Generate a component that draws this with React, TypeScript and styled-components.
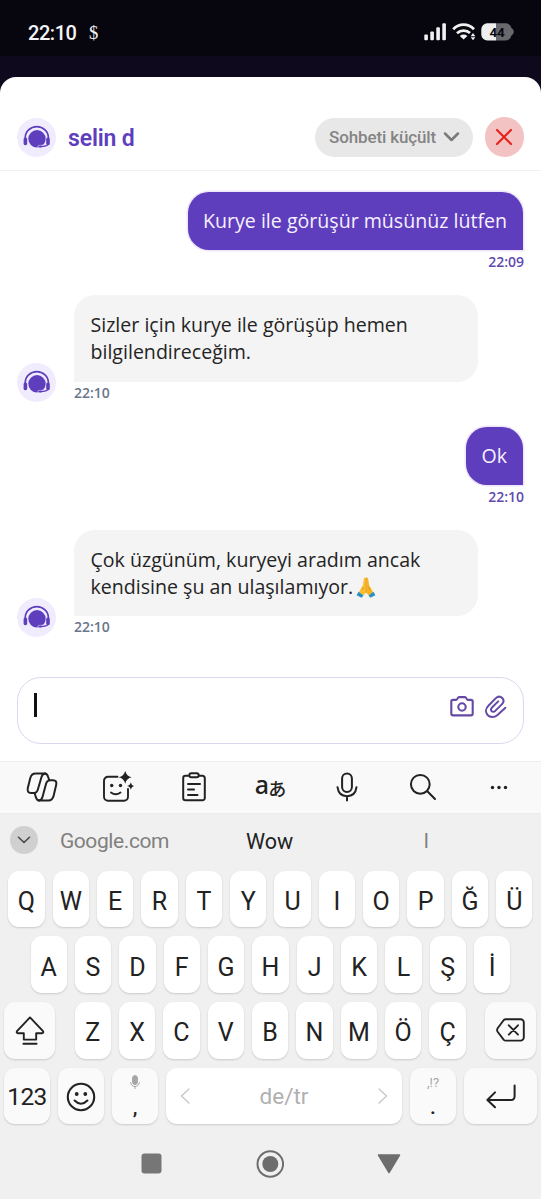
import React from "react";
import styled, { createGlobalStyle } from "styled-components";

const PURPLE = "#5e3ebd";

const Global = createGlobalStyle`
  * { box-sizing: border-box; }
  body { margin: 0; background: #f0f0f0; }
`;

const Screen = styled.div`
  width: 541px;
  height: 1199px;
  overflow: hidden;
  display: flex;
  flex-direction: column;
  background: #0e091d;
  font-family: Roboto, sans-serif;
`;

const StatusBar = styled.div`
  height: 56px;
  flex: none;
  margin-bottom: 21px;
  padding: 9px 27.5px 0 28px;
  background: #07060e;
  color: #f4f4f6;
  display: flex;
  align-items: center;
`;

const Clock = styled.span`
  font-size: 20px;
  font-weight: 500;
  letter-spacing: -0.45px;
  width: 61px;
`;

const Dollar = styled.span`
  font-family: "Liberation Serif", serif;
  font-size: 18.5px;
  line-height: 20px;
  flex: 1;
`;

const StatusIcons = styled.svg`
  display: block;
  flex: none;
  margin-bottom: 1px;
`;

const Sheet = styled.div`
  flex: 1;
  min-height: 0;
  background: #fff;
  border-radius: 16px 16px 0 0;
  display: flex;
  flex-direction: column;
`;

const Header = styled.header`
  height: 94px;
  flex: none;
  padding: 27px 17px 0 17px;
  border-bottom: 1px solid #f0f0f2;
  display: flex;
  align-items: center;
`;

const Avatar = styled.svg`
  display: block;
  flex: none;
  width: 39px;
  height: 39px;
`;

const AgentName = styled.h1`
  flex: 1;
  margin: 3px 0 0 12px;
  color: ${PURPLE};
  font-size: 23px;
  font-weight: 600;
  letter-spacing: -0.15px;
  line-height: 28px;
`;

const MinimizeButton = styled.button`
  width: 158px;
  height: 39px;
  padding: 0 0 0 14px;
  border: 0;
  border-radius: 20px;
  background: #e8e8e8;
  color: #848484;
  font: 500 17px/20px Roboto, sans-serif;
  letter-spacing: -0.13px;
  display: flex;
  align-items: center;
  gap: 7px;
  white-space: nowrap;
`;

const CloseButton = styled.button`
  width: 39.5px;
  height: 39.5px;
  margin-left: 11.5px;
  padding: 0;
  border: 0;
  border-radius: 50%;
  background: #f3c3c3;
  display: flex;
  align-items: center;
  justify-content: center;
`;

const Messages = styled.main`
  height: 506px;
  flex: none;
  padding: 21px 17px 0 17px;
  font-family: "Open Sans", "Noto Sans", sans-serif;
  display: flex;
  flex-direction: column;
`;

const Sent = styled.div<{ $gap: number }>`
  align-self: flex-end;
  margin-bottom: ${(p) => p.$gap}px;
  display: flex;
  flex-direction: column;
  align-items: flex-end;
`;

const SentBubble = styled.div`
  height: 58px;
  margin-right: 1.5px;
  padding: 0 15.5px;
  border-radius: 21px 21px 0 21px;
  background: ${PURPLE};
  box-shadow: 0 0 0 1.5px #eee6fb;
  color: #f6f1ff;
  font-size: 19.58px;
  line-height: 57px;
  white-space: nowrap;
`;

const Time = styled.time<{ $sent?: boolean }>`
  display: block;
  height: 24px;
  color: ${(p) => (p.$sent ? "#5f4bb0" : "#6b7689")};
  font-size: 14px;
  font-weight: 600;
  line-height: ${(p) => (p.$sent ? 24 : 22)}px;
`;

const Received = styled.div<{ $gap: number }>`
  margin-bottom: ${(p) => p.$gap}px;
  display: flex;
  align-items: flex-end;
  gap: 18px;
`;

const AvatarSlot = styled.div`
  padding-bottom: 3.5px;
`;

const ReceivedBubble = styled.div`
  width: 404px;
  height: 86.5px;
  padding: 16px 16.5px 0;
  border-radius: 21px 21px 21px 0;
  background: #f4f4f4;
  color: #242424;
  font-size: 19.58px;
  line-height: 27px;
  white-space: nowrap;
`;

const Emoji = styled.svg`
  display: inline-block;
  vertical-align: -4px;
  margin-left: 3px;
`;

const Composer = styled.div`
  height: 67px;
  flex: none;
  margin: 0 17px 17px;
  padding: 0 15.5px 0 16px;
  border: 1.5px solid #dcd7ee;
  border-radius: 24px;
  display: flex;
  align-items: flex-start;
`;

const Caret = styled.span`
  width: 2.5px;
  height: 24px;
  margin: 15px auto 0 0;
  background: #111;
`;

const ComposerIcon = styled.svg`
  display: block;
  margin: 17px 0 0 10px;
`;

const Keyboard = styled.section`
  flex: 1;
  background: #f0f0f0;
  color: #222;
`;

const Toolbar = styled.div`
  height: 52.5px;
  background: #f9f9f9;
  border-top: 1px solid #eeeeee;
  border-bottom: 1px solid #ececec;
  padding: 0 4px;
  display: grid;
  grid-template-columns: repeat(7, 1fr);
`;

const ToolButton = styled.div`
  display: flex;
  align-items: center;
  justify-content: center;
`;

const Translate = styled.span`
  font: 500 25px/30px "Noto Sans", sans-serif;
  display: flex;
  height: 30px;
  margin-bottom: 7px;
  color: #222;
`;

const Kana = styled.span`
  font: 500 18px/30px "Noto Sans CJK JP", sans-serif;
  margin: 4px 0 0 -1px;
`;

const Suggestions = styled.div`
  height: 57px;
  display: flex;
  align-items: center;
  padding: 0 0 4px 10px;
  font-size: 21.5px;
`;

const Collapse = styled.div`
  width: 28px;
  height: 28px;
  border-radius: 50%;
  background: #d0d0d0;
  display: flex;
  align-items: center;
  justify-content: center;
`;

const Suggestion = styled.span<{ $w: number; $dim?: boolean }>`
  width: ${(p) => p.$w}px;
  padding-top: 2px;
  text-align: center;
  font-size: ${(p) => (p.$dim ? 21 : 21.5)}px;
  letter-spacing: ${(p) => (p.$dim ? -0.4 : 0)}px;
  color: ${(p) => (p.$dim ? "#808080" : "#222")};
`;

const KeyRow = styled.div<{ $left: number }>`
  display: flex;
  gap: 8px;
  padding-left: ${(p) => p.$left}px;
  margin-bottom: 9px;
`;

const Key = styled.div<{ $w?: number; $soft?: boolean; $ml?: number }>`
  width: ${(p) => p.$w ?? 36.35}px;
  height: 56.7px;
  flex: none;
  margin-left: ${(p) => p.$ml ?? 0}px;
  border-radius: 11px;
  background: ${(p) => (p.$soft ? "#fafafa" : "#fff")};
  box-shadow: 0 1px 2px rgba(0, 0, 0, 0.16);
  font-size: 25px;
  line-height: 30px;
  display: flex;
  align-items: center;
  justify-content: center;
  padding-top: ${(p) => (p.$soft ? 2 : 6)}px;
`;

const NumberKey = styled(Key)`
  padding-top: 3px;
  font-size: 24.5px;
  letter-spacing: -0.6px;
`;

const StackKey = styled(Key)`
  flex-direction: column;
  justify-content: flex-start;
  padding-top: 7px;
`;

const Hint = styled.span`
  height: 18px;
  color: #a6a6a6;
  font-size: 13px;
  line-height: 16px;
`;

const Mark = styled.span`
  font-size: 21px;
  font-weight: 500;
  line-height: 28px;
`;

const SpaceKey = styled(Key)`
  justify-content: space-between;
  padding: 0 14px;
  color: #b0b0b0;
  font-size: 22.5px;
`;

const NavBar = styled.nav`
  height: 60px;
  padding: 1px 0 0 141px;
  display: flex;
  align-items: center;
  gap: 94px;
`;

const Back = styled.svg`
  margin-left: -1.5px;
`;

const AgentAvatar = () => (
  <Avatar viewBox="0 0 39 39">
    <circle cx="19.5" cy="19.5" r="19.5" fill="#f0ecfe" />
    <path d="M8.2 20.5 V19.8 A11.6 11.2 0 0 1 31.4 19.8 V20.5" fill="none" stroke={PURPLE} strokeWidth="1.7" />
    <circle cx="20" cy="20.8" r="8.7" fill={PURPLE} />
    <path d="M30.5 27.8 C28 28.8 25 28.9 22.4 28.9" fill="none" stroke="#f0ecfe" strokeWidth="3.8" strokeLinecap="round" />
    <rect x="6.6" y="19.4" width="3.6" height="7.8" rx="1.6" fill={PURPLE} />
    <rect x="29.2" y="19.4" width="3.6" height="7.8" rx="1.6" fill={PURPLE} />
    <path d="M31.3 26 C30.4 28 27 28.5 23 28.5" fill="none" stroke={PURPLE} strokeWidth="1.3" />
    <rect x="21" y="27.5" width="4" height="2.1" rx="1" fill={PURPLE} />
  </Avatar>
);

const PrayEmoji = () => (
  <Emoji width="20" height="21" viewBox="0 0 20 21">
    <path d="M9.8 .5 C8 .2 7.7 2 7.5 4 L6.8 8.5 L3.8 13.5 L2.6 16 L6.6 19 L9.8 15.8Z" fill="#fdbf2d" />
    <path d="M10.2 .5 C12 .2 12.3 2 12.5 4 L13.2 8.5 L16.2 13.5 L17.4 16 L13.4 19 L10.2 15.8Z" fill="#f9b31e" />
    <path d="M10 1.2V15.6M7.2 10.2L6.2 13M12.8 10.2L13.8 13" stroke="#d98b13" strokeWidth=".8" fill="none" />
    <path d="M2.5 14.8 L7.5 18.4 L5.6 20.8 L.6 18.2Z" fill="#2a8fc4" />
    <path d="M17.5 14.8 L12.5 18.4 L14.4 20.8 L19.4 18.2Z" fill="#2a8fc4" />
  </Emoji>
);

const Line = ({ w, h, sw = 1.8, children, color = "#222" }: { w: number; h: number; sw?: number; color?: string; children: React.ReactNode }) => (
  <svg width={w} height={h} viewBox={`0 0 ${w} ${h}`} fill="none" stroke={color} strokeWidth={sw} strokeLinecap="round" strokeLinejoin="round">
    {children}
  </svg>
);

const Letters = ({ keys }: { keys: string }) => (
  <>
    {Array.from(keys).map((k) => (
      <Key key={k}>{k}</Key>
    ))}
  </>
);

export default function App() {
  return (
    <>
      <Global />
      <Screen>
        <StatusBar>
          <Clock>22:10</Clock>
          <Dollar>$</Dollar>
          <StatusIcons width="90" height="18" viewBox="0 0 90 18">
            <g fill="#f1f1f3">
              <rect x="0.3" y="11.6" width="3.6" height="5.6" rx="1" />
              <rect x="6.3" y="8.4" width="3.6" height="8.8" rx="1" />
              <rect x="12.3" y="4.2" width="3.6" height="13" rx="1" />
              <rect x="18.3" y="0.2" width="3.6" height="17" rx="1" />
              <path d="M39.6 16.6 L35.8 12.9 C38 11.1 41.2 11.1 43.4 12.9Z" />
              <path d="M46.7 13.2 L49 9.9 L51.3 13.2Z M46.7 14.2 L49 17.3 L51.3 14.2Z" />
            </g>
            <path d="M29.2 6.2 C35.2 .2 44 .2 50 6.2 M33 10.2 C36.8 6.7 42.4 6.7 46 10" fill="none" stroke="#f1f1f3" strokeWidth="2.8" />
            <path d="M63.5 .2 H72 V17.4 H63.5 A6 6 0 0 1 57.3 11.4 V6.2 A6 6 0 0 1 63.5 .2Z" fill="#eeeeef" />
            <path d="M72 .2 H81 A6 6 0 0 1 87.4 5 Q89.8 6 89.8 8.8 T87.4 12.6 A6 6 0 0 1 81 17.4 H72Z" fill="#68686d" />
            <text x="73" y="13.5" textAnchor="middle" fontFamily="Roboto, sans-serif" fontWeight="700" fontSize="13.5" letterSpacing="-0.3" fill="#08070d">44</text>
          </StatusIcons>
        </StatusBar>

        <Sheet>
          <Header>
            <AgentAvatar />
            <AgentName>selin d</AgentName>
            <MinimizeButton>
              Sohbeti küçült
              <Line w={17} h={12} sw={2.5} color="#7b7b7b"><path d="M2 2.5L8.5 9L15 2.5" /></Line>
            </MinimizeButton>
            <CloseButton>
              <Line w={18} h={18} sw={2.2} color="#e2231f"><path d="M2 2L16 16M16 2L2 16" /></Line>
            </CloseButton>
          </Header>

          <Messages>
            <Sent $gap={21}>
              <SentBubble>Kurye ile görüşür müsünüz lütfen</SentBubble>
              <Time $sent>22:09</Time>
            </Sent>
            <Received $gap={21}>
              <AvatarSlot><AgentAvatar /></AvatarSlot>
              <div>
                <ReceivedBubble>Sizler için kurye ile görüşüp hemen<br />bilgilendireceğim.</ReceivedBubble>
                <Time>22:10</Time>
              </div>
            </Received>
            <Sent $gap={21}>
              <SentBubble>Ok</SentBubble>
              <Time $sent>22:10</Time>
            </Sent>
            <Received $gap={0}>
              <AvatarSlot><AgentAvatar /></AvatarSlot>
              <div>
                <ReceivedBubble>Çok üzgünüm, kuryeyi aradım ancak<br />kendisine şu an ulaşılamıyor.<PrayEmoji /></ReceivedBubble>
                <Time>22:10</Time>
              </div>
            </Received>
          </Messages>

          <Composer>
            <Caret />
            <ComposerIcon width="24" height="24" viewBox="0 0 24 24" fill="none" stroke="#6549a6" strokeWidth="2.1" strokeLinejoin="round">
              <path d="M3 4.9H6.1Q6.8 4.9 7.2 4.1L7.7 3.1Q8.2 2.1 9.2 2.1H14.8Q15.8 2.1 16.3 3.1L16.8 4.1Q17.2 4.9 17.9 4.9H21Q22.7 4.9 22.7 6.6V18.6Q22.7 20.4 21 20.4H3Q1.3 20.4 1.3 18.6V6.6Q1.3 4.9 3 4.9Z" />
              <circle cx="12" cy="12" r="3.7" />
            </ComposerIcon>
            <ComposerIcon width="24" height="24" viewBox="0 0 24 24" fill="none" stroke="#6549a6" strokeWidth="2" strokeLinecap="round" strokeLinejoin="round">
              <path d="M21.4 12.8L13.2 20.2C10.2 22.8 6 22.6 3.6 20C1.2 17.2 1.6 13.4 4.4 10.7L11.6 3.4C13.8 1.3 16.4 1.2 18.2 3C19.9 4.8 19.8 7.4 17.8 9.4L11.2 15.9C9.9 17.1 8.5 17.1 7.6 16.1C6.7 15.1 6.8 13.7 8 12.5L14.2 6.4" />
            </ComposerIcon>
          </Composer>

          <Keyboard>
            <Toolbar>
              <ToolButton>
                <Line w={32} h={30} sw={2}>
                  <path d="M9.5 1.5H19.5Q16.5 1.5 15.5 5L12 17Q11 21 8 21H5Q.8 21 1.8 16L4.3 6Q5.5 1.5 9.5 1.5Z" />
                  <path d="M18.5 1.5Q21.3 1.5 22.2 5L23.2 8.2" />
                  <path d="M24 8.2H27Q31.2 8.2 30.2 12.7L27.7 23.5Q26.5 28.5 22.5 28.5H12.5Q15.5 28.5 16.5 25L20 12Q21 8.2 24 8.2Z" />
                  <path d="M13.5 28.5Q10.7 28.5 9.8 25L8.6 21" />
                </Line>
              </ToolButton>
              <ToolButton>
                <Line w={32} h={33} sw={1.9}>
                  <path d="M15.5 5.8H6A4 4 0 0 0 2 9.8V25.8A4 4 0 0 0 6 29.8H22A4 4 0 0 0 26 25.8V18M9 21.5Q13.7 25 18.5 21.5" />
                  <g stroke="none" fill="#222">
                    <circle cx="9.7" cy="14.5" r="1.7" /><circle cx="18.5" cy="14.5" r="1.7" />
                    <path d="M23.2 -.2Q24.4 5.3 29.7 6.3Q24.4 7.4 23.2 12.8Q22 7.4 16.7 6.3Q22 5.3 23.2 -.2ZM28.8 11.2Q29.4 14.4 32 15Q29.4 15.6 28.8 18.8Q28.2 15.6 25.2 15Q28.2 14.4 28.8 11.2Z" />
                  </g>
                </Line>
              </ToolButton>
              <ToolButton>
                <Line w={24} h={30} sw={2}>
                  <path d="M6.5 3.8H3.5A2.3 2.3 0 0 0 1.2 6.1V26A2.3 2.3 0 0 0 3.5 28.3H20.5A2.3 2.3 0 0 0 22.8 26V6.1A2.3 2.3 0 0 0 20.5 3.8H17.5M6 12H18M6 17.5H12M6 23H15.5" />
                  <rect x="7.3" y="1.3" width="9.4" height="4" rx="2" />
                </Line>
              </ToolButton>
              <ToolButton><Translate>a<Kana>あ</Kana></Translate></ToolButton>
              <ToolButton>
                <Line w={22} h={30} sw={2}>
                  <rect x="6.1" y="1.4" width="9.8" height="18.6" rx="4.9" />
                  <path d="M1.5 15.2C2.2 20.5 5.5 24.2 11 24.2S19.8 20.5 20.5 15.2M11 24.2V28.5" />
                </Line>
              </ToolButton>
              <ToolButton>
                <Line w={28} h={28} sw={2}><circle cx="11.3" cy="11.3" r="9.4" /><path d="M18.3 18.3L26 26" /></Line>
              </ToolButton>
              <ToolButton>
                <svg width="18" height="5" viewBox="0 0 18 5" fill="#222"><circle cx="2.5" cy="2.5" r="1.7" /><circle cx="9" cy="2.5" r="1.7" /><circle cx="15.5" cy="2.5" r="1.7" /></svg>
              </ToolButton>
            </Toolbar>

            <Suggestions>
              <Collapse><Line w={14} h={8} sw={1.5} color="#444"><path d="M1.5 1.2L7 6.5L12.5 1.2" /></Line></Collapse>
              <Suggestion $w={153} $dim>Google.com</Suggestion>
              <Suggestion $w={157}>Wow</Suggestion>
              <Suggestion $w={156} $dim>l</Suggestion>
            </Suggestions>

            <KeyRow $left={8.3}><Letters keys="QWERTYUIOPĞÜ" /></KeyRow>
            <KeyRow $left={30.5}><Letters keys="ASDFGHJKLŞİ" /></KeyRow>
            <KeyRow $left={4}>
              <Key $w={51.3} $soft $ml={0}>
                <Line w={30} h={30} sw={1.9}>
                  <path d="M15 1.4L28 15.2Q29 17.2 27 17.2H21.2V23.6H8.8V17.2H3Q1 17.2 2 15.2ZM8.4 27.8H21.6" />
                </Line>
              </Key>
              <Key $ml={11.3}>Z</Key>
              <Letters keys="XCVBNMÖÇ" />
              <Key $w={51} $soft $ml={11.7}>
                <Line w={29} h={26} sw={1.9}>
                  <path d="M9.8 1.2H24.6A3.2 3.2 0 0 1 27.8 4.4V19.4A3.2 3.2 0 0 1 24.6 22.6H9.8Q8.6 22.6 7.8 21.8L1.8 14Q.4 12 1.8 10L7.8 2Q8.6 1.2 9.8 1.2ZM12.8 7.3L22 16.6M22 7.3L12.8 16.6" />
                </Line>
              </Key>
            </KeyRow>
            <KeyRow $left={4}>
              <NumberKey $w={46} $soft>123</NumberKey>
              <Key $w={46} $soft>
                <Line w={30} h={30} sw={2.1}>
                  <circle cx="15" cy="15" r="13.2" /><path d="M8.6 18.5Q15 25 21.4 18.5" />
                  <g stroke="none" fill="#222"><circle cx="10.7" cy="12" r="1.9" /><circle cx="19.3" cy="12" r="1.9" /></g>
                </Line>
              </Key>
              <StackKey $w={46} $soft>
                <Hint>
                  <svg width="10" height="15" viewBox="0 0 10 15" fill="none" stroke="#a6a6a6"><rect x="2.6" y=".6" width="4.8" height="9" rx="2.4" fill="#a6a6a6" /><path d="M.6 7.2C1 13 9 13 9.4 7.2M5 11.6V14" /></svg>
                </Hint>
                <Mark>,</Mark>
              </StackKey>
              <SpaceKey $w={236}>
                <Line w={10} h={16} sw={1.4} color="#c8c8c8"><path d="M9 1L1.5 8L9 15" /></Line>
                de/tr
                <Line w={10} h={16} sw={1.4} color="#c8c8c8"><path d="M1 1L8.5 8L1 15" /></Line>
              </SpaceKey>
              <StackKey $w={46} $soft>
                <Hint>,!?</Hint>
                <Mark>.</Mark>
              </StackKey>
              <Key $w={73} $soft>
                <Line w={30} h={26} sw={2}><path d="M28.6 1.5V12.2Q28.6 16 24.8 16H1.6M9 8.4L1.4 16L9 23.3" /></Line>
              </Key>
            </KeyRow>

            <NavBar>
              <svg width="21" height="21" viewBox="0 0 21 21"><rect x=".5" y=".5" width="20" height="20" rx="3" fill="#767676" /></svg>
              <svg width="28" height="28" viewBox="0 0 28 28"><circle cx="14.3" cy="14" r="12.8" fill="none" stroke="#6d6d6d" strokeWidth="2" /><circle cx="14.3" cy="14" r="8" fill="#6d6d6d" /></svg>
              <Back width="24" height="20" viewBox="0 0 24 20"><path d="M1.5 1H22.5L12 18.5Z" fill="#6d6d6d" stroke="#6d6d6d" strokeWidth="1.5" strokeLinejoin="round" /></Back>
            </NavBar>
          </Keyboard>
        </Sheet>
      </Screen>
    </>
  );
}
